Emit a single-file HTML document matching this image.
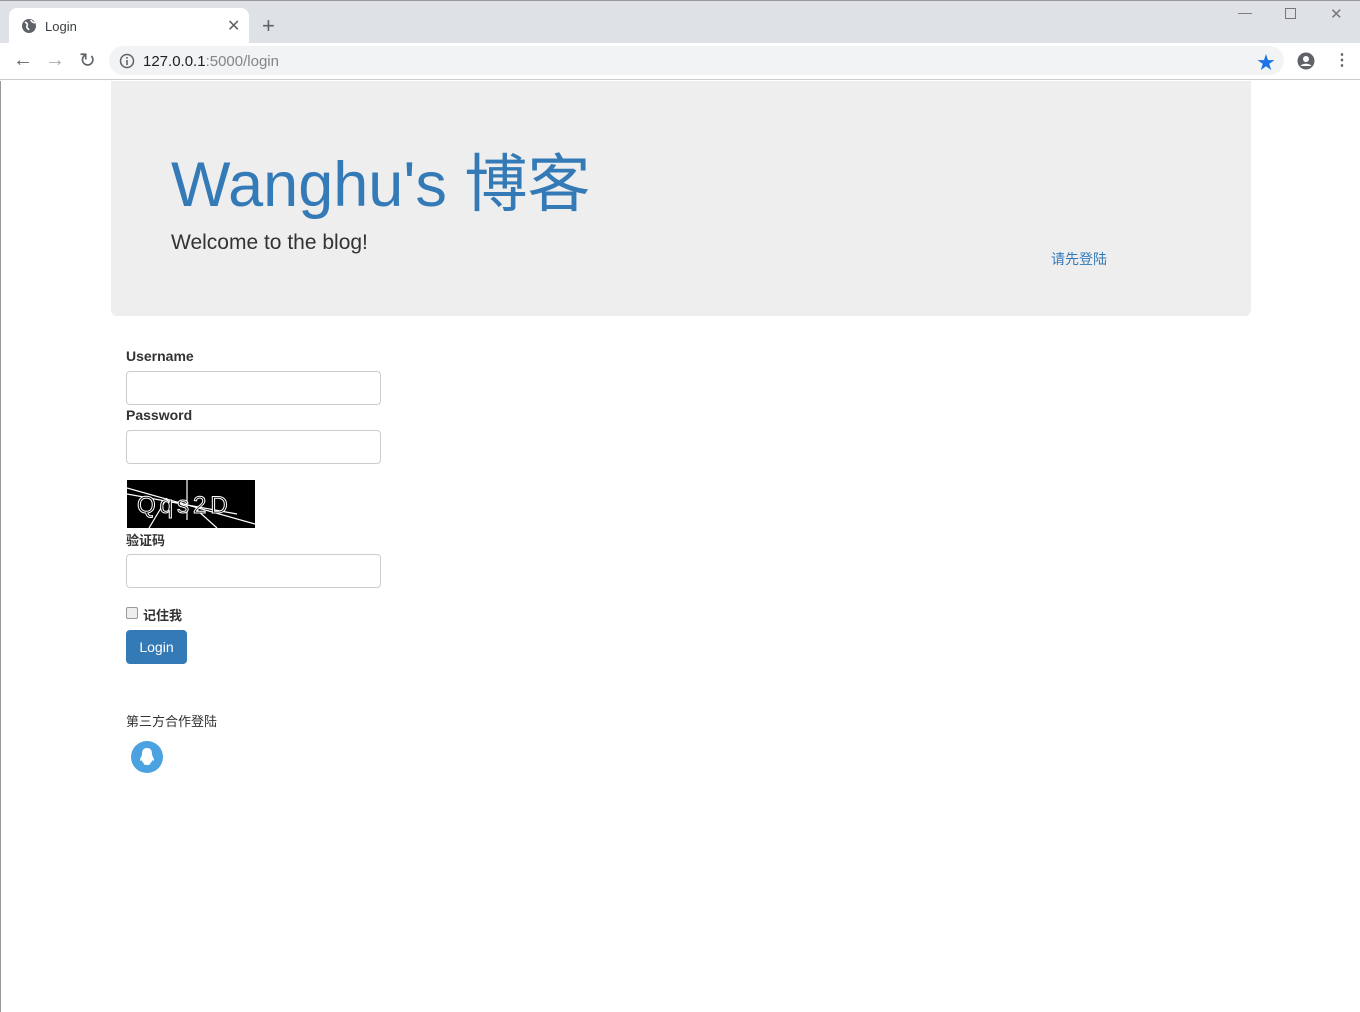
<!DOCTYPE html>
<html><head><meta charset="utf-8"><style>
*{box-sizing:border-box}
body{margin:0;width:1360px;height:1012px;overflow:hidden;font-family:"Liberation Sans","Noto Sans CJK SC",sans-serif;background:#fff;position:relative}
.abs{position:absolute}
.tabbar{left:0;top:0;width:1360px;height:43px;background:#dee1e6;border-top:1px solid #999}
.tab{left:9px;top:8px;width:240px;height:36px;background:#fff;border-radius:8px 8px 0 0}
.toolbar{left:0;top:43px;width:1360px;height:37px;background:#fff;border-bottom:1px solid #ccc}
.url{left:109px;top:46px;width:1175px;height:29px;background:#f1f3f4;border-radius:15px}
.jumbo{left:111px;top:81px;width:1140px;height:235px;background:#eee;border-radius:0 0 6px 6px}
.inp{position:absolute;left:126px;width:255px;height:34px;border:1px solid #ccc;border-radius:4px}
.lbl{position:absolute;left:126px;font-size:14px;font-weight:bold;color:#333}
</style></head><body>
<div class="abs tabbar"></div>
<div class="abs tab"></div>
<svg class="abs" style="left:21px;top:18px" width="16" height="16"><circle cx="8" cy="8" r="7" fill="#5f6368"/><path d="M4 4c2 1 3 2 2 4s1 2 2 4M10 2c0 2 2 2 4 3" stroke="#fff" stroke-width="1.6" fill="none"/></svg>
<div class="abs" style="left:45px;top:19px;font-size:13px;color:#3c4043">Login</div>
<div class="abs" style="left:227px;top:16px;font-size:16px;color:#5f6368">✕</div>
<div class="abs" style="left:262px;top:13px;font-size:22px;color:#5f6368">+</div>
<div class="abs" style="left:1238px;top:4px;font-size:14px;color:#777">—</div>
<div class="abs" style="left:1285px;top:8px;width:11px;height:11px;border:1px solid #777"></div>
<div class="abs" style="left:1330px;top:5px;font-size:15px;color:#777">✕</div>
<div class="abs toolbar"></div>
<div class="abs" style="left:13px;top:49px;font-size:20px;color:#5f6368">←</div>
<div class="abs" style="left:45px;top:49px;font-size:20px;color:#aaa">→</div>
<div class="abs" style="left:79px;top:48px;font-size:20px;color:#5f6368">↻</div>
<div class="abs url"></div>
<svg class="abs" style="left:119px;top:53px" width="16" height="16"><circle cx="8" cy="8" r="6.5" fill="none" stroke="#5f6368" stroke-width="1.5"/><rect x="7.2" y="7" width="1.6" height="5" fill="#5f6368"/><rect x="7.2" y="4" width="1.6" height="1.6" fill="#5f6368"/></svg>
<div class="abs" style="left:143px;top:53px;font-size:15px;color:#202124">127.0.0.1<span style="color:#80868b">:5000/login</span></div>
<div class="abs" style="left:1257px;top:49px;font-size:18px;color:#1a73e8">★</div>
<svg class="abs" style="left:1297px;top:52px" width="18" height="18"><circle cx="9" cy="9" r="8.5" fill="#5f6368"/><circle cx="9" cy="7" r="3" fill="#fff"/><path d="M3.5 14c2-3 9-3 11 0" fill="#fff"/></svg>
<div class="abs" style="left:1334px;top:50px;font-size:16px;color:#5f6368;font-weight:bold">⋮</div>
<div class="abs" style="left:0;top:81px;width:1px;height:931px;background:#999"></div>
<div class="abs jumbo"></div>
<div class="abs" style="left:171px;top:134px;font-size:63px;color:#337ab7;white-space:nowrap">Wanghu's 博客</div>
<div class="abs" style="left:171px;top:231px;font-size:21px;color:#333">Welcome to the blog!</div>
<div class="abs" style="left:1051px;top:249px;font-size:14px;color:#337ab7">请先登陆</div>
<div class="lbl" style="top:348px">Username</div>
<div class="inp" style="top:371px"></div>
<div class="lbl" style="top:407px">Password</div>
<div class="inp" style="top:430px"></div>
<svg class="abs" style="left:127px;top:480px" width="128" height="48"><rect width="128" height="48" fill="#000"/><g stroke="#fff" fill="none" stroke-width="1.2"><path d="M0 8L128 44M0 14L110 34M22 48L40 18M60 0L60 40M70 30L90 48"/></g><text x="10" y="33" font-size="24" fill="#000" stroke="#fff" stroke-width="1" font-family="Liberation Sans" letter-spacing="4">Qqs2D</text></svg>
<div class="lbl" style="top:530px;font-size:13px">验证码</div>
<div class="inp" style="top:554px"></div>
<div class="abs" style="left:126px;top:607px;width:12px;height:12px;border:1px solid #999;border-radius:2px;background:#eee"></div>
<div class="abs" style="left:143px;top:605px;font-size:13px;font-weight:bold;color:#333">记住我</div>
<div class="abs" style="left:126px;top:630px;width:61px;height:34px;background:#337ab7;border-radius:4px;color:#fff;font-size:14px;text-align:center;line-height:34px">Login</div>
<div class="abs" style="left:126px;top:711px;font-size:13px;color:#333">第三方合作登陆</div>
<svg class="abs" style="left:131px;top:741px" width="32" height="32"><circle cx="16" cy="16" r="16" fill="#4aa3e0"/><path d="M16 7c-4 0-5 3-5 6 0 2-2 4-2 6 0 1 1 1 2 0 0 2 1 3 2 3-1 1 0 2 3 2s4-1 3-2c1 0 2-1 2-3 1 1 2 1 2 0 0-2-2-4-2-6 0-3-1-6-5-6z" fill="#fff"/></svg>
</body></html>
